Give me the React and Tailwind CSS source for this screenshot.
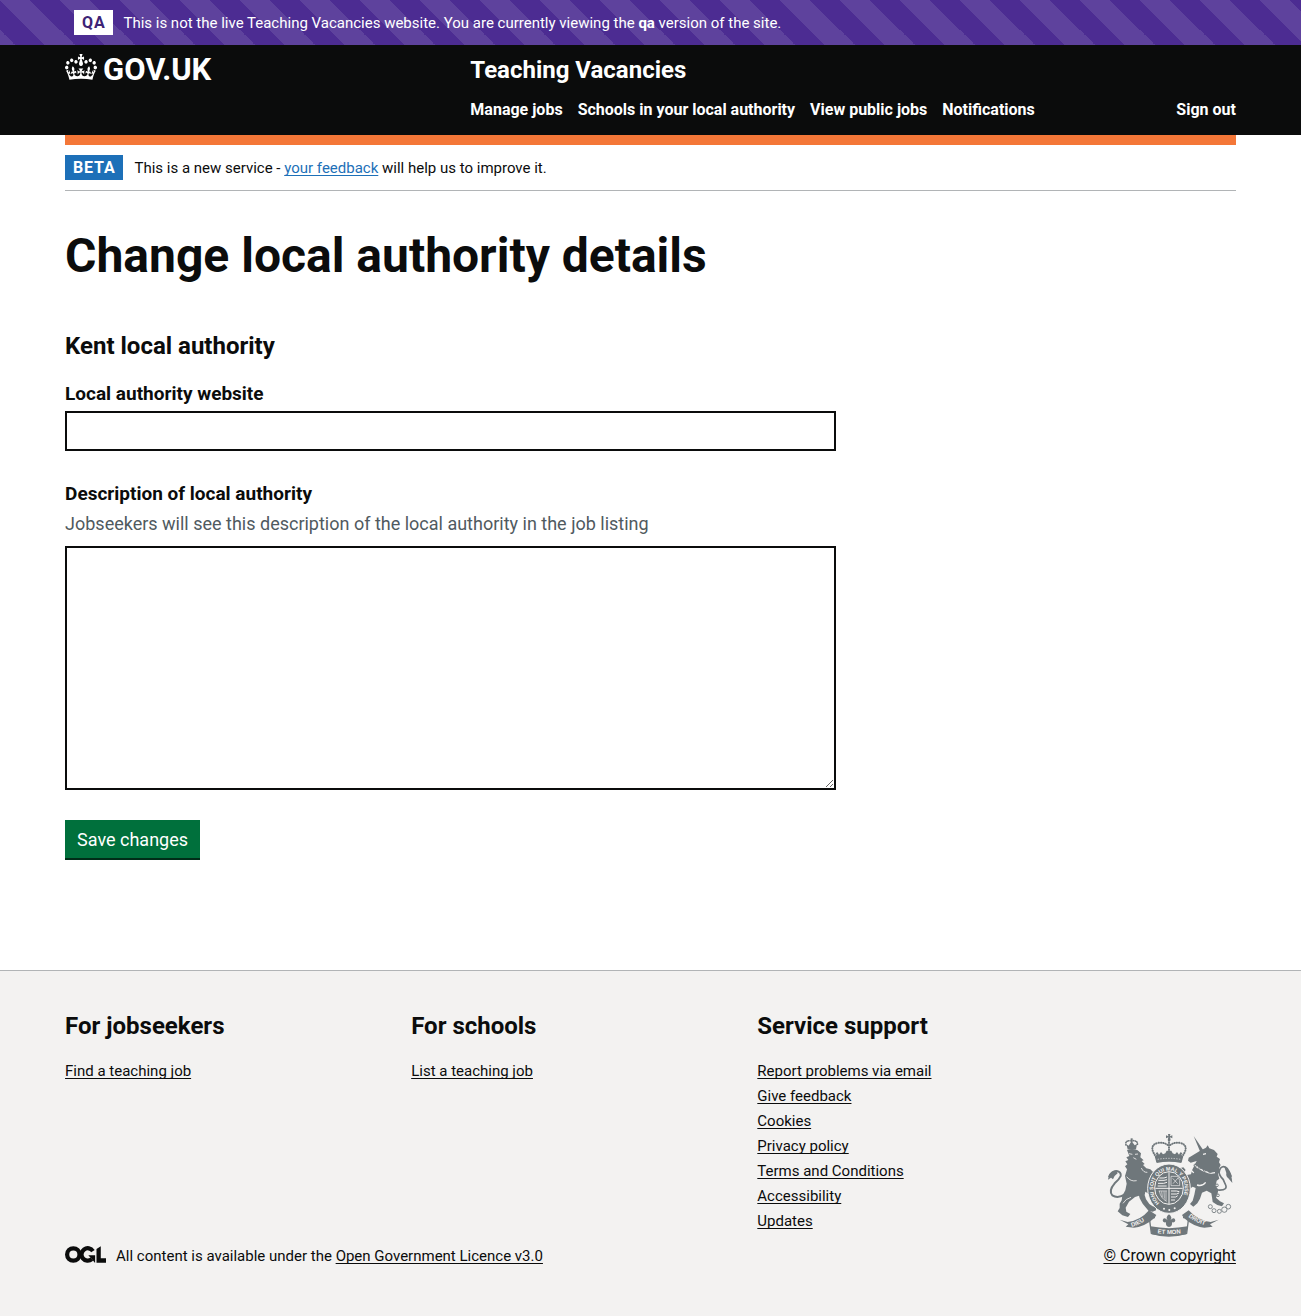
const CROWN =
  "M25 30.2c3.5 1.5 7.7-.2 9.1-3.7 1.5-3.6-.2-7.8-3.9-9.2-3.6-1.4-7.6.3-9.1 3.9-1.4 3.5.3 7.5 3.9 9zM9 39.5c3.6 1.5 7.8-.2 9.2-3.7 1.5-3.6-.2-7.8-3.9-9.1-3.6-1.5-7.6.2-9.1 3.8-1.4 3.5.3 7.5 3.8 9zM4.4 57.2c3.5 1.5 7.7-.2 9.1-3.8 1.5-3.6-.2-7.7-3.9-9.1-3.5-1.5-7.6.3-9.1 3.8-1.4 3.5.3 7.6 3.9 9.1zm38.3-21.4c3.5 1.5 7.7-.2 9.1-3.8 1.5-3.6-.2-7.7-3.9-9.1-3.6-1.5-7.6.3-9.1 3.8-1.3 3.6.4 7.7 3.9 9.1zm64.4-5.6c-3.6 1.5-7.8-.2-9.1-3.7-1.5-3.6.2-7.8 3.8-9.2 3.6-1.4 7.7.3 9.2 3.9 1.3 3.5-.4 7.5-3.9 9zm15.9 9.3c-3.6 1.5-7.7-.2-9.1-3.7-1.5-3.6.2-7.8 3.7-9.1 3.6-1.5 7.7.2 9.2 3.8 1.5 3.5-.3 7.5-3.8 9zm4.7 17.7c-3.6 1.5-7.8-.2-9.2-3.8-1.5-3.6.2-7.7 3.9-9.1 3.6-1.5 7.7.3 9.2 3.8 1.3 3.5-.4 7.6-3.9 9.1zM89.3 35.8c-3.6 1.5-7.8-.2-9.2-3.8-1.4-3.6.2-7.7 3.9-9.1 3.6-1.5 7.7.3 9.2 3.8 1.4 3.6-.3 7.7-3.9 9.1zM69.7 17.7l8.9 4.7V9.3l-8.9 2.8c-.2-.3-.5-.6-.9-.9L72.4 0H59.6l3.5 11.2c-.3.3-.6.5-.9.9l-8.8-2.8v13.1l8.8-4.7c.3.3.6.7.9.9l-5 15.4v.1c-.2.8-.4 1.6-.4 2.4 0 4.1 3.1 7.5 7 8.1h.2c.3 0 .7.1 1 .1.4 0 .7 0 1-.1h.2c4-.6 7.1-4.1 7.1-8.1 0-.8-.1-1.7-.4-2.4V34l-5.1-15.4c.4-.2.7-.6 1-.9zM66 92.8c16.9 0 32.8 1.1 47.1 3.2 4-16.9 8.9-26.7 14-33.5l-9.6-3.4c1 4.9 1.1 7.2 0 10.2-1.5-1.4-3-4.3-4.2-8.7L108.6 76c2.8-2 5-3.2 7.5-3.3-4.4 9.4-10 11.9-13.6 11.2-4.3-.8-6.3-4.6-5.6-7.9 1-4.7 5.7-5.9 8-.5 4.3-8.7-3-11.4-7.6-8.8 7.1-7.2 7.9-13.5 2.1-21.1-8 6.1-8.1 12.3-4.5 20.8-4.7-5.4-12.1-2.5-9.5 6.2 3.4-5.2 7.9-2 7.2 3.1-.6 4.3-6.4 7.8-13.5 7.2-10.3-.9-10.9-8-11.2-13.8 2.5-.5 7.1 1.8 11 7.3L80.2 60c-4.1 4.4-8 5.3-12.3 5.4 1.4-4.4 8-11.6 8-11.6H55.5s6.4 7.2 7.9 11.6c-4.2-.1-8-1-12.3-5.4l1.4 16.4c3.9-5.5 8.5-7.7 10.9-7.3-.3 5.8-.9 12.8-11.1 13.8-7.2.6-12.9-2.9-13.5-7.2-.7-5 3.8-8.3 7.1-3.1 2.7-8.7-4.6-11.6-9.4-6.2 3.7-8.5 3.6-14.7-4.6-20.8-5.8 7.6-5 13.9 2.2 21.1-4.7-2.6-11.9.1-7.7 8.8 2.3-5.5 7.1-4.2 8.1.5.7 3.3-1.3 7.1-5.7 7.9-3.5.7-9-1.8-13.5-11.2 2.5.1 4.7 1.3 7.5 3.3l-4.7-15.4c-1.2 4.4-2.7 7.2-4.3 8.7-1.1-3-.9-5.3 0-10.2l-9.5 3.4c5 6.9 9.9 16.7 14 33.5 14.8-2.1 30.8-3.2 47.7-3.2z";

function Crown() {
  return (
    <svg aria-hidden="true" viewBox="0 0 132 97" preserveAspectRatio="none" className="-mt-1.5 h-[26px] w-8 shrink-0">
      <path fill="currentColor" fillRule="evenodd" d={CROWN} />
    </svg>
  );
}

function OglLogo() {
  return (
    <svg aria-hidden="true" viewBox="0 0 483 196" className="h-[17px] w-[41px] shrink-0" fill="none" stroke="currentColor" strokeWidth="50">
      <circle cx="98" cy="98" r="73" />
      <path d="M329 58A73 73 0 1 0 316 152" />
      <path d="M275 106h80v88h-3z" fill="currentColor" stroke="none" />
      <path d="M371 32 421.500 0v143H483v51H371z" fill="currentColor" stroke="none" />
    </svg>
  );
}

function RoyalArms() {
  return (
    <svg aria-hidden="true" viewBox="36 24 378 312" className="h-[104px] w-[126px]" fill="#6f777b">
      <defs>
        <path id="garter" d="M194 234A47 54 0 1 1 250 234" />
        <path id="scroll-left" d="M110 306Q140 298 164 275" />
        <path id="scroll-mid" d="M188 325Q222 329 264 325" />
        <path id="scroll-right" d="M280 275Q304 296 346 304" />
      </defs>
      {/* crown over the shield */}
      <path d="M219 27h7l-1 7 7-3v9l-7-3 2 9q-4 5-9 0l2-9-7 3v-9l7 3z" />
      <g fill="none" stroke="#6f777b" strokeWidth="6" strokeLinecap="round" strokeDasharray="1 6">
        <path d="M184 96q-26-34 4-42 18-4 33 8" />
        <path d="M260 96q26-34-4-42-18-4-33 8" />
        <path d="M222 46v44" />
      </g>
      <path d="M179 94l6-4-3-6 6-2 4 7 6-8 6 7 7-3 4-8h14l4 8 7 3 6-7 6 8 4-7 6 2-3 6 6 4-5 18q-38-8-76 0z" />
      <path d="M184 105q38-8 76 0l-1 9q-37-8-74 0z" />
      <path d="M188 103q34-6 68 0" fill="none" stroke="#f3f2f1" strokeWidth="2" strokeDasharray="4 4" />
      {/* lion */}
      <g>
        <g fill="none" stroke="#6f777b" strokeWidth="5" strokeLinecap="round" strokeDasharray="1 5">
          <path d="M93 60q-4-14 16-13 21-1 18 12" />
        </g>
        <path d="M94 58l7 4 5-8h8l5 7 7-4-3 16H98z" />
        <path d="M107 40h6v14h-6z" />
        <path d="M96 75q16-6 32 1l10 9-2 12 10 9-6 2 9 9-5 3 10 10 12 3 12 12-3 11 6 6-2 10 8 10-8 8 4 12-14 6-8-2-10-6-2 10 4 13 10 14 10 7 10 3 0 9-10 4-12-2-8-10-10-12-9-16-2-8-12 4-18 14-10 18 2 12 12 7-7 9-17-5-14-12 6-10 0-13 6-10 2-14 9-16 4-20-5-23 6-20-6-9 7-6-6-9 9-4-6-8 9-4z" />
        <path d="M90 208q-22 14-38 3-12-14 7-36 14-12 18-22 2-13-12-15-16 0-23 18" fill="none" stroke="#6f777b" strokeWidth="6" />
        <path d="M39 164q2-24 24-28l5 9q-12 8-14 18l-6-5z" />
        <path d="M102 86l10 2m8 0 9-1m-14 11 9 5M95 155q12 16 30 12m14-38q6 14 18 13M84 235q8-14 24-18" fill="none" stroke="#f3f2f1" strokeWidth="2.500" />
      </g>
      {/* unicorn */}
      <g>
        <path d="M296 33l30 44-9 7z" />
        <path d="M318 76l15-8 5-7 5 9 14 5 11 12-3 8 10 7-3 10 5 8-5 10 4 8-7 9 4 14-8 6-3 15 8 12-3 16-4 8 12 11 12 6-6 9-14-4-14-9-2-14-2-12-14-8-14 6-6 18-8 14-12 10-10-8 8-10 5-18 4-20-9-4-12 9-18-6-2-12 8-4-18-12-6-18 4-11 16-4 7 8-7 8 10 7 13-2 3-12 8-16 6-12-18 5-8-6 2-9z" />
        <path d="M369 195q33 2 21-19-3-13-12-20-11-14-1-27 9-9 20 2 8 12 12 24" fill="none" stroke="#6f777b" strokeWidth="5" />
        <path d="M388 126l6 18q-2 10 6 16l12 14q-2-24-10-38z" />
        <path d="M300 122l12 8 14 8 20 7 14-2M276 139q13-8 20 5m10 36q16 5 26-8m-8-84 9-2" fill="none" stroke="#f3f2f1" strokeWidth="4" />
        <g fill="none" stroke="#6f777b" strokeWidth="2.500">
          <circle cx="301" cy="121" r="4" />
          <circle cx="314" cy="128" r="4" />
          <circle cx="329" cy="135" r="4" />
          <circle cx="345" cy="140" r="4" />
        </g>
        <g fill="#f3f2f1" stroke="#6f777b" strokeWidth="2.500">
          <circle cx="346" cy="245" r="6" />
          <circle cx="357" cy="257" r="6" />
          <circle cx="373" cy="259" r="6" />
          <circle cx="388" cy="254" r="8" />
          <circle cx="400" cy="245" r="7" />
          <circle cx="366" cy="181" r="4" />
          <circle cx="369" cy="211" r="4" />
        </g>
      </g>
      {/* garter and quartered shield */}
      <ellipse cx="222" cy="191" rx="64" ry="74" stroke="#f3f2f1" strokeWidth="3" />
      <ellipse cx="222" cy="189" rx="43" ry="49" stroke="#f3f2f1" strokeWidth="3" />
      <path d="M222 142v95M181 190h82" stroke="#f3f2f1" strokeWidth="3" />
      <g fill="none" stroke="#f3f2f1" strokeWidth="3">
        <path d="M193 159h14l9-3m-26 10h17l9-2m-27 11h17l10-3m-28 11h27" />
        <path d="M228 154h20l6 12v16h-26zm5 6 15 16m1-17-15 17" strokeWidth="2" />
        <path d="M191 198h25m-23 0q4 22 22 31m-15-30 2 18m5-18 1 22m5-22v28" strokeWidth="2" />
        <path d="M228 198h16l9 2m-25 7h17l7-3m-24 12h14l6-4m-20 13h12" />
      </g>
      <g fill="#f3f2f1" fontFamily="'Liberation Sans', sans-serif" fontWeight="700" fontSize="16">
        <text>
          <textPath href="#garter">HONI SOIT QUI MAL Y PENSE</textPath>
        </text>
      </g>
      <g fill="#f3f2f1">
        <circle cx="207" cy="251" r="3" />
        <circle cx="223" cy="255" r="3" />
        <circle cx="239" cy="250" r="3" />
      </g>
      {/* motto scroll */}
      <path d="M74 284l24 7q38-4 64-35l22 14-5 8q-28 26-62 30l-25-3 8-7z" />
      <path d="M371 284l-24 7q-38-4-66-35l-20 14 5 8q28 26 62 30l25-3-8-7z" />
      <path d="M180 278q-16-2-16 8l5 39q52 16 106 0l5-39q0-10-16-8" fill="none" stroke="#6f777b" strokeWidth="4" />
      <path d="M166 304q56 11 112 0l-4 24q-52 10-104 0z" />
      <path d="M222 268q12 10 4 18 12-13 15 0 0 8-10 6 2 12-9 14-11-2-9-14-10 2-10-6 3-13 15 0-8-8 4-18z" />
      <g fill="#f3f2f1" fontFamily="'Liberation Sans', sans-serif" fontWeight="700" fontSize="18">
        <text>
          <textPath href="#scroll-left">DIEU</textPath>
        </text>
        <text>
          <textPath href="#scroll-mid">ET MON</textPath>
        </text>
        <text>
          <textPath href="#scroll-right">DROIT</textPath>
        </text>
      </g>
    </svg>
  );
}

const navLinks = ["Manage jobs", "Schools in your local authority", "View public jobs", "Notifications"];

const footerColumns = [
  { title: "For jobseekers", links: ["Find a teaching job"] },
  { title: "For schools", links: ["List a teaching job"] },
  {
    title: "Service support",
    links: [
      "Report problems via email",
      "Give feedback",
      "Cookies",
      "Privacy policy",
      "Terms and Conditions",
      "Accessibility",
      "Updates",
    ],
  },
];

const underlined = "underline underline-offset-2 [text-decoration-skip-ink:none]";

export default function App() {
  return (
    <div className="min-h-screen bg-[#f3f2f1] font-['Roboto','Liberation_Sans',sans-serif] text-[15px] leading-5 text-[#0b0c0c]">
      <div className="bg-[#4c2c92] bg-[linear-gradient(45deg,#ffffff1a_25%,transparent_25%,transparent_50%,#ffffff1a_50%,#ffffff1a_75%,transparent_75%)] bg-[length:60px_60px] py-2.5 text-white">
        <div className="mx-auto flex w-[90%] items-center gap-2.5 px-[9px]">
          <strong className="bg-white px-2 py-[3px] text-base leading-[19px] tracking-wider text-[#3d2375]">QA</strong>
          <p>
            This is not the live Teaching Vacancies website. You are currently viewing the <strong>qa</strong> version of the
            site.
          </p>
        </div>
      </div>

      <header className="bg-[#0b0c0c] py-2.5 text-white">
        <div className="mx-auto flex w-[90%]">
          <div className="box-content w-1/3 shrink-0 pr-[15px]">
            <a href="#" className="flex items-center gap-1.5 text-[31px] leading-[30px] font-bold">
              <Crown />
              <span>GOV.UK</span>
            </a>
          </div>
          <div className="grow">
            <a href="#" className="block text-2xl leading-[30px] font-bold">
              Teaching Vacancies
            </a>
            <nav className="mt-[15px] mb-[5px] flex gap-[15px] text-base leading-5 font-bold">
              {navLinks.map((label) => (
                <a key={label} href="#">
                  {label}
                </a>
              ))}
              <a href="#" className="ml-auto">
                Sign out
              </a>
            </nav>
          </div>
        </div>
      </header>

      <div className="bg-white pb-[110px]">
        <div className="mx-auto w-[90%]">
          <div className="h-2.5 bg-[#f47738]" />
          <div className="flex items-center gap-[11px] border-b border-[#b1b4b6] py-2.5">
            <strong className="bg-[#1d70b8] px-2 py-[3px] text-base leading-[19px] tracking-wider text-white">BETA</strong>
            <p>
              This is a new service -{" "}
              <a href="#" className={`text-[#1d70b8] ${underlined}`}>
                your feedback
              </a>{" "}
              will help us to improve it.
            </p>
          </div>

          <main className="grid grid-cols-3 gap-[30px] pt-10">
            <div className="col-span-2">
              <h1 className="text-5xl leading-[50px] font-bold">Change local authority details</h1>
              <h2 className="mt-[50px] mb-5 text-2xl leading-[30px] font-bold">Kent local authority</h2>
              <form className="text-lg leading-[25px]">
                <label htmlFor="website" className="block text-[19px] leading-[25px] font-bold">
                  Local authority website
                </label>
                <input
                  id="website"
                  type="text"
                  className="mt-[5px] block h-10 w-full border-2 border-[#0b0c0c] bg-white p-[5px]"
                />
                <label htmlFor="description" className="mt-[30px] block text-[19px] leading-[25px] font-bold">
                  Description of local authority
                </label>
                <p id="description-hint" className="mt-[5px] text-[#505a5f]">
                  Jobseekers will see this description of the local authority in the job listing
                </p>
                <textarea
                  id="description"
                  aria-describedby="description-hint"
                  className="mt-2.5 block h-[244px] w-full resize-y border-2 border-[#0b0c0c] bg-white p-[5px]"
                />
                <button type="button" className="mt-[30px] mb-0.5 h-[38px] bg-[#00703c] px-3 text-white shadow-[0_2px_0_#002d18]">
                  Save changes
                </button>
              </form>
            </div>
          </main>
        </div>
      </div>

      <footer className="border-t border-[#b1b4b6] bg-[#f3f2f1] pt-10 pb-[50px]">
        <div className="mx-auto flex w-[90%] items-end">
          <div className="grow">
            <div className="grid grid-cols-3">
              {footerColumns.map(({ title, links }) => (
                <div key={title}>
                  <h2 className="mb-5 text-2xl leading-[30px] font-bold">{title}</h2>
                  <ul className="flex flex-col gap-[5px]">
                    {links.map((label) => (
                      <li key={label}>
                        <a href="#" className={underlined}>
                          {label}
                        </a>
                      </li>
                    ))}
                  </ul>
                </div>
              ))}
            </div>
            <div className="mt-[15px] flex items-start gap-2.5">
              <OglLogo />
              <p>
                All content is available under the{" "}
                <a href="#" className={underlined}>
                  Open Government Licence v3.0
                </a>
              </p>
            </div>
          </div>
          <a href="#" className={`flex flex-col items-center gap-[9px] text-base leading-5 ${underlined}`}>
            <RoyalArms />
            © Crown copyright
          </a>
        </div>
      </footer>
    </div>
  );
}
